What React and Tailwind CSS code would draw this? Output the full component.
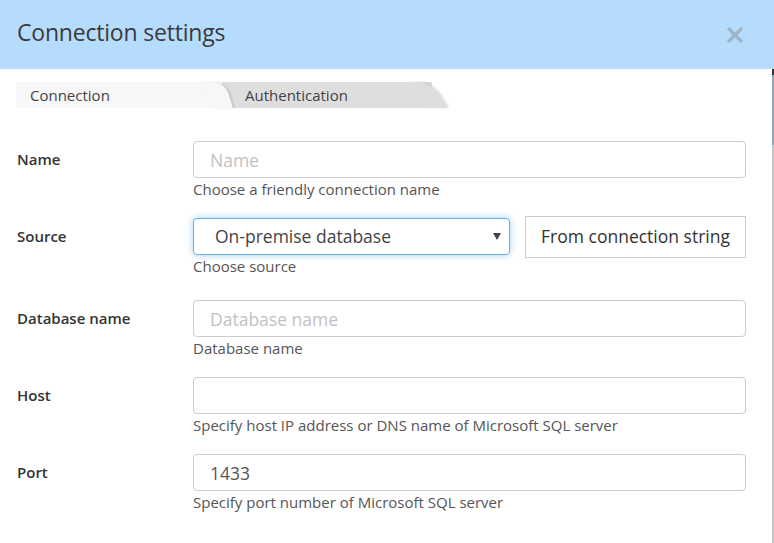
import React from 'react';

const font = { fontFamily: '"Open Sans", "Liberation Sans", sans-serif' };

const Field = ({ label, help, children, last }) => (
  <div className={`flex items-start ${last ? '' : 'mb-[19px]'}`}>
    <div className="w-[193px] shrink-0 pl-[17px] h-[37px] flex items-center text-[15px] font-semibold text-[#333]">
      {label}
    </div>
    <div className="flex-1 mr-[26px]">
      {children}
      <div className="mt-[1px] text-[15px] leading-[20px] text-[#555]">{help}</div>
    </div>
  </div>
);

const TextInput = ({ placeholder, value }) => (
  <input
    readOnly
    placeholder={placeholder}
    defaultValue={value}
    className="block w-full h-[37px] border border-[#ccc] rounded-[4px] px-[16px] text-[17.5px] text-[#555] placeholder:text-[#c2c2c2] outline-none bg-white"
  />
);

const App = () => {
  return (
    <div style={font} className="w-[774px] h-[543px] bg-white flex overflow-hidden">
      <div className="w-[772px] h-full flex flex-col">
        {/* header */}
        <header className="h-[69px] bg-[#b6dcfd] flex items-center justify-between pl-[17px] pr-[28px] shrink-0">
          <h1 className="mb-[4px] text-[23px] font-normal text-[#3a3a3a] tracking-[-0.2px]">Connection settings</h1>
          <svg width="18" height="16" viewBox="0 0 18 16" className="mt-[1px]">
            <path d="M2 1 L16 15 M16 1 L2 15" stroke="#9fb3c4" strokeWidth="3.2" />
          </svg>
        </header>

        {/* tabs */}
        <div className="flex pl-[16px] mt-[13px] h-[26px]">
          <div className="relative z-10 w-[206px] h-full bg-[#f7f7f7] text-[15px] text-[#444] leading-[26px] pl-[14px]">
            Connection
            <span className="absolute -right-[7px] top-0 h-full w-[22px] bg-[#f7f7f7] skew-x-[17deg] rounded-tr-[12px] shadow-[2px_0_2px_rgba(0,0,0,0.12)]" />
          </div>
          <div className="relative w-[210px] h-full bg-[#dedede] text-[15px] text-[#444] leading-[26px] pl-[23px]">
            Authentication
            <span className="absolute -right-[8px] top-0 h-full w-[26px] bg-[#dedede] skew-x-[30deg] rounded-tr-[14px] shadow-[2px_0_2px_rgba(0,0,0,0.12)]" />
          </div>
        </div>

        {/* form */}
        <div className="pt-[33px]">
          <Field label="Name" help="Choose a friendly connection name">
            <TextInput placeholder="Name" />
          </Field>

          <div className="flex items-start mb-[24px]">
            <div className="w-[193px] shrink-0 pl-[17px] h-[37px] flex items-center text-[15px] font-semibold text-[#333]">
              Source
            </div>
            <div className="flex-1 mr-[26px]">
              <div className="flex items-center gap-[15px]">
                <div className="relative w-[317px] h-[37px] border border-[#66afe9] rounded-[4px] shadow-[0_0_7px_rgba(102,175,233,0.6)] flex items-center pl-[21px] text-[17.5px] text-[#444] bg-white">
                  On-premise database
                  <svg width="8" height="7" viewBox="0 0 8 7" className="absolute right-[8px] top-[14px]">
                    <path d="M0 0 H8 L4 7 Z" fill="#444" />
                  </svg>
                </div>
                <button className="flex-1 h-[42px] -my-[3px] border border-[#ccc] bg-white text-[17.5px] text-[#333]">
                  From connection string
                </button>
              </div>
              <div className="mt-[1px] text-[15px] leading-[20px] text-[#555]">Choose source</div>
            </div>
          </div>

          <Field label="Database name" help="Database name">
            <TextInput placeholder="Database name" />
          </Field>
          <Field label="Host" help="Specify host IP address or DNS name of Microsoft SQL server">
            <TextInput />
          </Field>
          <Field label="Port" help="Specify port number of Microsoft SQL server" last>
            <TextInput value="1433" />
          </Field>
        </div>
      </div>

      {/* background edge behind the dialog */}
      <div className="w-[2px] h-full flex flex-col">
        <div className="h-[69px] bg-[#b6dcfd]" />
        <div className="h-[6px] bg-[#333]" />
        <div className="h-[70px] bg-[#8fa6bb]" />
        <div className="flex-1 bg-[#c4c4c4]" />
      </div>
    </div>
  );
};

export default App;
